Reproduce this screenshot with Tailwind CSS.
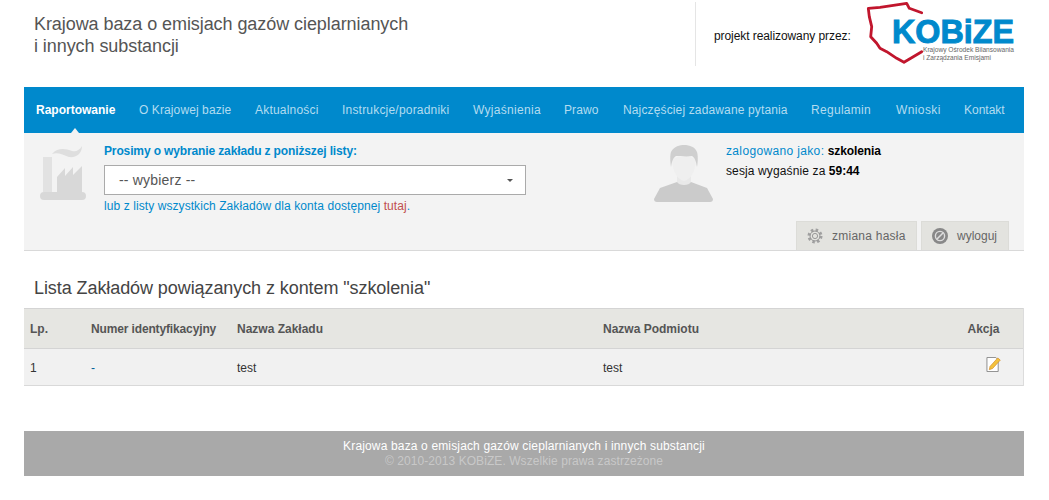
<!DOCTYPE html>
<html lang="pl">
<head>
<meta charset="utf-8">
<script src="https://cdn.jsdelivr.net/npm/@tailwindcss/browser@4"></script>
</head>
<body class="bg-white font-['Liberation_Sans',Arial,sans-serif] text-[12px] text-[#333] overflow-hidden">
<div class="w-[1000px] ml-[24px]">
  <header class="h-[87px] flex">
    <div class="w-[671px] pl-[10px] pt-[13px] text-[18px] leading-[22px] tracking-[-0.07px] text-[#555]">Krajowa baza o emisjach gazów cieplarnianych<br>i innych substancji</div>
    <div class="h-[64px] mt-[2px] border-l border-[#e5e5e5] flex items-start">
      <span class="ml-[18px] mt-[25px] text-[#111] tracking-[-0.08px] whitespace-nowrap">projekt realizowany przez:</span>
      <svg class="ml-[15px] shrink-0 overflow-visible" width="150" height="62" viewBox="0 0 150 62">
        <path d="M2.3 6.3 L14 5.3 L40.7 1.3 L43.3 6.3 L55.7 10.7 M2.3 6.3 L3.3 14.7 L5.7 24.7 L4.7 34.7 L10.7 41.3 L14 46.3 L20.7 49.7 L30.7 56.3 L38 60.3 L47.3 54.7 L55.7 49.7" fill="none" stroke="#c1162d" stroke-width="2.8" stroke-linejoin="round" stroke-linecap="round"/>
        <text x="26" y="41" font-family="Liberation Sans" font-weight="700" font-size="34" textLength="122" lengthAdjust="spacingAndGlyphs" fill="#0089cc" stroke="#0089cc" stroke-width="1">KOBiZE</text>
        <text x="57" y="50" font-family="Liberation Sans" font-size="7" textLength="91" lengthAdjust="spacingAndGlyphs" fill="#666">Krajowy Ośrodek Bilansowania</text>
        <text x="57" y="58" font-family="Liberation Sans" font-size="7" textLength="68" lengthAdjust="spacingAndGlyphs" fill="#666">i Zarządzania Emisjami</text>
      </svg>
    </div>
  </header>

  <nav class="relative h-[46px] bg-[#0089cc] flex items-center gap-[24px] px-[12px] text-[#b3dcf0] whitespace-nowrap">
    <a class="w-[79px] font-bold text-white">Raportowanie</a>
    <a class="w-[92px] tracking-[0.1px]">O Krajowej bazie</a>
    <a class="w-[63px] tracking-[0.2px]">Aktualności</a>
    <a class="w-[107px] tracking-[0.2px]">Instrukcje/poradniki</a>
    <a class="w-[67px] tracking-[0.3px]">Wyjaśnienia</a>
    <a class="w-[35px] tracking-[0.1px]">Prawo</a>
    <a class="w-[164px] tracking-[0.14px]">Najczęściej zadawane pytania</a>
    <a class="w-[61px] tracking-[0.3px]">Regulamin</a>
    <a class="w-[44px] tracking-[0.4px]">Wnioski</a>
    <a class="w-[41px]">Kontakt</a>
    <span class="absolute left-[47px] bottom-0 w-0 h-0 border-x-[4px] border-x-transparent border-b-[5px] border-b-[#f3f3f3]"></span>
  </nav>

  <section class="h-[118px] bg-[#f3f3f3] border-b border-[#d9d9d9] flex relative">
    <svg class="ml-[14px] mt-[11px] shrink-0" width="50" height="56" viewBox="0 0 50 56">
      <path d="M14 10 C20 3 28 5 34 7 C38 8 42 6 44 2 C44 9 39 14 31 13 C25 11 20 8 14 10Z" fill="#dedede"/>
      <path d="M5 13 H14 V48 H5Z" fill="#e2e2e2"/>
      <path d="M19 48 V33 L27 24 V32 L35 23 V31 L44 22 V48Z" fill="#d8d8d8"/>
      <rect x="2" y="48" width="46" height="8" rx="4" fill="#d8d8d8"/>
    </svg>
    <div class="ml-[16px] w-[422px] shrink-0">
      <div class="mt-[10px] font-bold text-[#0089cc] leading-[16px] tracking-[-0.13px]">Prosimy o wybranie zakładu z poniższej listy:</div>
      <div class="mt-[6px] h-[30px] bg-white border border-[#aaa] flex items-center justify-between pl-[14px] pr-[12px] text-[14px] tracking-[0.2px] text-[#555]">
        <span>-- wybierz --</span>
        <span class="w-0 h-0 border-x-[3px] border-x-transparent border-t-[3px] border-t-[#555]"></span>
      </div>
      <div class="mt-[3px] leading-[16px] text-[#0089cc] tracking-[0.08px]">lub z listy wszystkich Zakładów dla konta dostępnej <span class="text-[#c0504d]">tutaj</span>.</div>
    </div>
    <svg class="ml-[128px] mt-[12px] shrink-0" width="60" height="58" viewBox="0 0 60 58">
      <path d="M0 54 L6 43 L23 37 H37 L53 43 L59 54 Q59 57 56 57 H3 Q0 57 0 54Z" fill="#cbcbcb"/>
      <path d="M23 30 H37 V37 C35 41 25 41 23 37Z" fill="#e9e9e9"/>
      <path d="M18 15 C19 27 23 34 30 36 C37 34 41 27 42 15 C38 12 34 11 30 11 C26 11 22 12 18 15Z" fill="#efefef"/>
      <path d="M17 22 C16 16 16 10 17 7 C20 1 26 0 30 0 C36 0 41 2 43 7 C44 10 44 16 43 22 C42 16 41 13 38 11 C33 12 26 11 22 11 C19 13 18 16 17 22Z" fill="#cfcfcf"/>
    </svg>
    <div class="ml-[12px] mt-[8px] leading-[20px] whitespace-nowrap">
      <div><span class="text-[#0089cc] tracking-[0.35px]">zalogowano jako:</span> <b class="text-black tracking-[-0.1px]">szkolenia</b></div>
      <div class="text-[#111]"><span class="tracking-[0.12px]">sesja wygaśnie za</span> <b class="text-black">59:44</b></div>
    </div>
    <div class="absolute right-[15px] bottom-0 flex gap-[4px] text-[#666]">
      <a class="h-[29px] w-[121px] bg-[#e3e3df] border-x border-t border-[#dcdcd8] flex items-center pl-[10px] gap-[9px] tracking-[0.25px]">
        <svg width="16" height="16" viewBox="0 0 16 16"><circle cx="8" cy="8" r="6" fill="none" stroke="#a0a0a0" stroke-width="3" stroke-dasharray="2.4 2.3"/><circle cx="8" cy="8" r="5" fill="none" stroke="#999" stroke-width="1"/><circle cx="8" cy="8" r="2.6" fill="#e3e3df" stroke="#999"/></svg>
        zmiana hasła
      </a>
      <a class="h-[29px] w-[88px] bg-[#e3e3df] border-x border-t border-[#dcdcd8] flex items-center pl-[10px] gap-[9px]">
        <svg width="16" height="16" viewBox="0 0 16 16"><circle cx="8" cy="8" r="8" fill="#888"/><circle cx="8" cy="8" r="4.6" fill="none" stroke="#ddd" stroke-width="1.4"/><path d="M4.8 11.2 L11.2 4.8" stroke="#ddd" stroke-width="1.6"/></svg>
        wyloguj
      </a>
    </div>
  </section>

  <h2 class="mt-[26px] pl-[10px] text-[18px] leading-[22px] tracking-[-0.08px] text-[#444]">Lista Zakładów powiązanych z kontem "szkolenia"</h2>

  <table class="mt-[9px] w-full table-fixed border-collapse">
    <thead>
      <tr class="h-[40px] bg-[#e6e6e2] border-y border-[#d4d4d4] text-[#555] font-bold text-left">
        <th class="w-[61px] pl-[6px] pt-[1px]">Lp.</th>
        <th class="w-[146px] pl-[6px] pt-[1px] tracking-[-0.14px]">Numer identyfikacyjny</th>
        <th class="w-[366px] pl-[6px] pt-[1px]">Nazwa Zakładu</th>
        <th class="pl-[6px] pt-[1px]">Nazwa Podmiotu</th>
        <th class="w-[72px] text-left pl-[16px] pt-[1px] border-r border-[#dcdcdc]">Akcja</th>
      </tr>
    </thead>
    <tbody>
      <tr class="h-[37px] bg-[#f1f1f1] border-y border-[#d9d9d9]">
        <td class="pl-[6px] pt-[1px]">1</td>
        <td class="pl-[6px] pt-[1px] text-[#005f99]">-</td>
        <td class="pl-[6px] pt-[1px]">test</td>
        <td class="pl-[6px] pt-[1px]">test</td>
        <td class="pl-[34px] align-top pt-[8px] border-r border-[#dcdcdc]">
          <svg width="15" height="15" viewBox="0 0 15 16"><path d="M.5 .5 H10 L12.5 3 V15.5 H.5Z" fill="#fff" stroke="#8a8a8a"/><path d="M3 13.5 L3.8 10 L12 1 L14.7 3.3 L6.5 12.3Z" fill="#f3c23c" stroke="#d58a1e" stroke-width=".7"/></svg>
        </td>
      </tr>
    </tbody>
  </table>

  <footer class="mt-[45px] h-[45px] bg-[#a9a9a9] text-center pt-[8px] leading-[15px]">
    <div class="text-white tracking-[0.15px]">Krajowa baza o emisjach gazów cieplarnianych i innych substancji</div>
    <div class="text-[#c8c8c8] tracking-[0.07px]">© 2010-2013 KOBiZE. Wszelkie prawa zastrzeżone</div>
  </footer>
</div>
</body>
</html>
